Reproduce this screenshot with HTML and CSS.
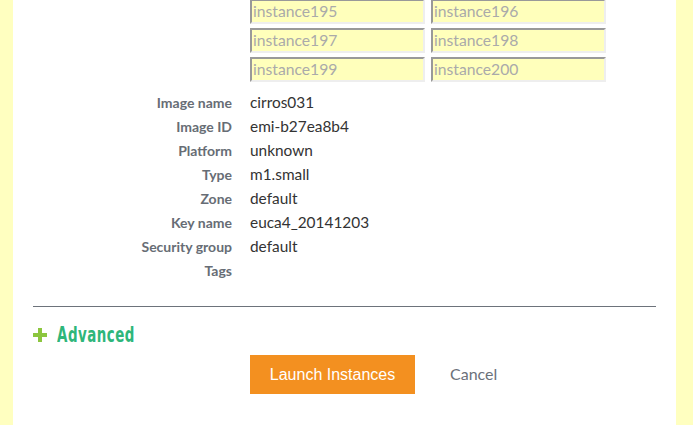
FILE: index.html
```html
<!DOCTYPE html>
<html>
<head>
<meta charset="utf-8">
<link rel="stylesheet" href="styles.css">
</head>
<body>
<div class="panel">
  <div class="indent">
    <div class="inputs">
      <input class="field" placeholder="instance195">
      <input class="field" placeholder="instance196">
      <input class="field" placeholder="instance197">
      <input class="field" placeholder="instance198">
      <input class="field" placeholder="instance199">
      <input class="field" placeholder="instance200">
    </div>
  </div>
  <div class="details">
    <div class="label">Image name</div><div class="value">cirros031</div>
    <div class="label">Image ID</div><div class="value">emi-b27ea8b4</div>
    <div class="label">Platform</div><div class="value">unknown</div>
    <div class="label">Type</div><div class="value">m1.small</div>
    <div class="label">Zone</div><div class="value">default</div>
    <div class="label">Key name</div><div class="value">euca4_20141203</div>
    <div class="label">Security group</div><div class="value">default</div>
    <div class="label">Tags</div><div class="value"></div>
  </div>
  <hr class="rule">
  <div class="advanced">
    <svg class="plus" width="14" height="14" viewBox="0 0 14 14"><rect x="5" y="0" width="4" height="14" fill="#8cc63e"/><rect x="0" y="5" width="14" height="4" fill="#8cc63e"/></svg>
    <span class="adv-text">Advanced</span>
  </div>
  <div class="indent actions">
    <button class="launch">Launch Instances</button>
    <a class="cancel">Cancel</a>
  </div>
</div>
</body>
</html>
```

FILE: styles.css
```css
html, body {
  margin: 0;
  padding: 0;
  background: #ffffc0;
}
.panel {
  margin: 0 17px 0 13px;
  background: #ffffff;
  height: 425px;
  padding: 0 20px;
  box-sizing: border-box;
  font-family: Lato, "Liberation Sans", sans-serif;
  overflow: hidden;
}
.indent {
  padding-left: 217px;
}
.inputs {
  margin-top: -1px;
  display: grid;
  grid-template-columns: 175px 175px;
  column-gap: 6px;
  row-gap: 4px;
}
.field {
  box-sizing: border-box;
  width: 175px;
  height: 25px;
  margin: 0;
  padding: 0 0 1px 1px;
  background: #ffffbb;
  border-style: solid;
  border-width: 2px;
  border-color: #999999 #eeeeee #eeeeee #999999;
  font-family: Lato, sans-serif;
  font-size: 15.7px;
  color: #333;
  outline: none;
}
.field::placeholder {
  color: #aaaaaa;
  opacity: 1;
}
.details {
  margin-top: 8px;
  display: grid;
  grid-template-columns: 199px 1fr;
  column-gap: 18px;
  grid-auto-rows: 24px;
  align-items: center;
}
.label {
  text-align: right;
  font-size: 14px;
  font-weight: bold;
  color: #676d75;
}
.value {
  font-size: 15.4px;
  line-height: 22px;
  color: #333333;
}
.rule {
  margin: 24px 0 0 0;
  border: 0;
  height: 1px;
  background: #6d737b;
}
.advanced {
  margin-top: 16px;
  height: 24px;
  display: flex;
  align-items: center;
}
.plus {
  display: block;
  margin-right: 10px;
}
.adv-text {
  font-family: "DejaVu Sans", sans-serif;
  font-stretch: condensed;
  font-weight: bold;
  font-size: 21px;
  color: #2eb67a;
  letter-spacing: 0.7px;
  display: inline-block;
  transform: scaleX(0.71);
  transform-origin: left center;
}
.actions {
  margin-top: 8px;
  display: flex;
  align-items: center;
}
.launch {
  width: 165px;
  height: 39px;
  border: 0;
  margin: 0;
  padding: 0;
  background: #f39020;
  color: #ffffff;
  font-family: "Liberation Sans", Arial, sans-serif;
  font-size: 16px;
}
.cancel {
  margin-left: 35px;
  font-size: 16px;
  line-height: 20px;
  margin-top: -2px;
  color: #6b717a;
}
```
